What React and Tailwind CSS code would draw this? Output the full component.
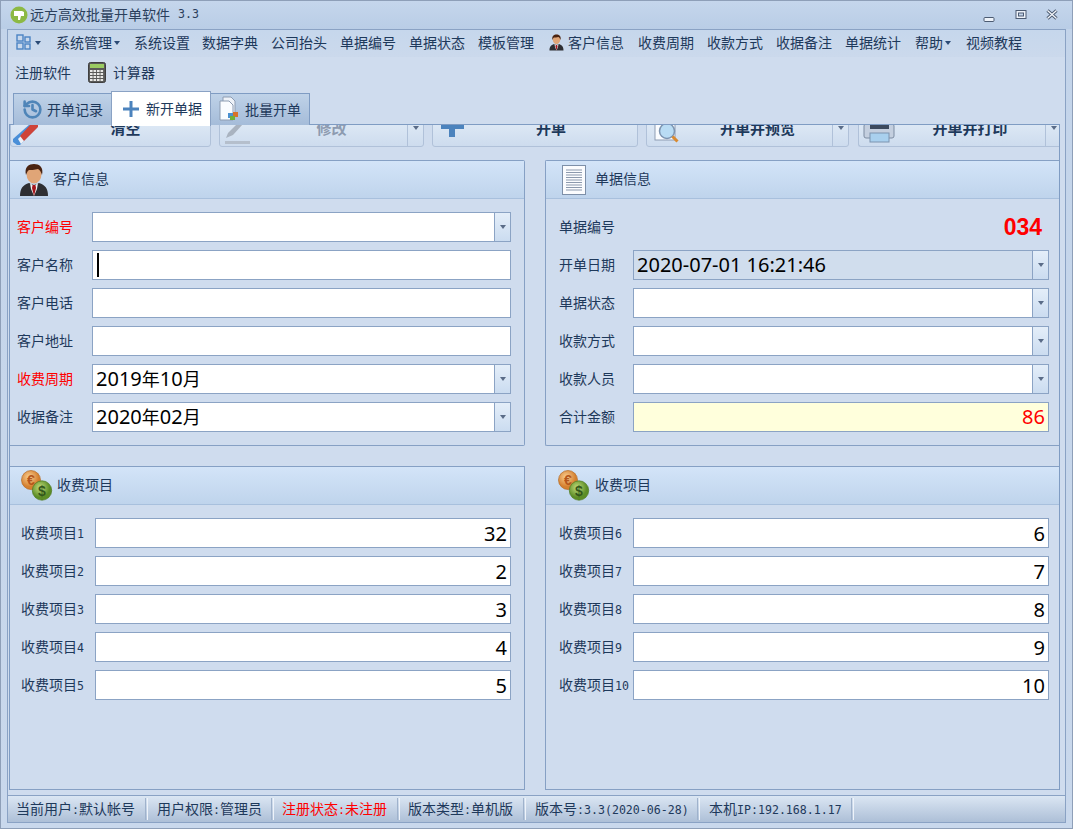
import React from "react";
import { History } from "lucide-react";

const cjk = { fontFamily: '"Noto Sans CJK SC","Noto Sans",sans-serif' };
const L = ({ children }) => (
  <span className="text-[11.6px] font-['DejaVu_Sans_Mono',monospace]">{children}</span>
);
const Y = ({ children }) => <span className="text-[18px]">{children}</span>;

const Caret = ({ c = "#2b4a75" }) => (
  <span className="inline-block w-0 h-0 border-l-[3.5px] border-r-[3.5px] border-t-[4px] border-l-transparent border-r-transparent" style={{ borderTopColor: c }} />
);

const Person = ({ s = 1 }) => (
  <svg width={30 * s} height={34 * s} viewBox="0 0 30 34">
    <path d="M1 33c0-8 3-11 9-13l5 2 5-2c6 2 9 5 9 13z" fill="#2e2f33" />
    <path d="M11 20l4 3 4-3-1 6-3 7-3-7z" fill="#f0f0f0" />
    <path d="M13.6 22h2.8l.6 3-2 8-2-8z" fill="#a5161c" />
    <ellipse cx="15" cy="11" rx="7.5" ry="9.5" fill="#e0a577" />
    <path d="M7 12C5 4 10 1 15 1s10 3 8 11c-1-3-2-5-4-6-3 1-8 1-9 1-2 1-2 3-3 5z" fill="#4a2412" />
  </svg>
);

const Coins = () => (
  <svg width="32" height="31" viewBox="0 0 32 31" style={{ fontFamily: '"Liberation Sans",sans-serif' }}>
    <defs>
      <radialGradient id="co" cx="40%" cy="35%"><stop offset="0" stopColor="#f9cf94" /><stop offset="1" stopColor="#d5802f" /></radialGradient>
      <radialGradient id="cg" cx="40%" cy="35%"><stop offset="0" stopColor="#c2dc7c" /><stop offset="1" stopColor="#5c8d26" /></radialGradient>
    </defs>
    <circle cx="10" cy="10" r="9.5" fill="url(#co)" stroke="#b56a24" strokeWidth=".7" />
    <text x="10" y="15" fontSize="14" fontWeight="700" fill="#b4561a" textAnchor="middle">€</text>
    <circle cx="21" cy="20.5" r="9.7" fill="url(#cg)" stroke="#4f7a20" strokeWidth=".7" />
    <text x="21" y="25.5" fontSize="14" fontWeight="700" fill="#33561a" textAnchor="middle">$</text>
  </svg>
);

const Doc = () => (
  <svg width="24" height="30" viewBox="0 0 24 30">
    <rect x=".5" y=".5" width="23" height="29" fill="#fbfcfe" stroke="#7d8fa8" />
    {[5, 7.5, 10, 12.5, 15, 17.5, 20, 22.5, 25].map((y) => (
      <line key={y} x1="4" x2="20" y1={y} y2={y} stroke="#8c99ad" />
    ))}
  </svg>
);

const Field = ({ v, drop, bg = "bg-white", red, caret, right, low }) => (
  <div className={`flex-1 h-[30px] border border-[#8ba3c4] flex items-stretch ${bg}`}>
    <div className={`flex-1 flex items-center px-[3px] text-[20px] leading-none ${low ? "pt-[2px]" : ""} ${right ? "justify-end" : ""} ${red ? "text-[#ff0000]" : "text-black"}`} style={{ fontFamily: '"Noto Sans","Noto Sans CJK SC",sans-serif' }}>
      {caret && <span className="w-[2px] h-[24px] bg-black ml-[1px]" />}
      {v}
    </div>
    {drop && (
      <div className="w-[16px] border-l border-[#8ba3c4] bg-gradient-to-b from-[#e4eef9] to-[#cbdcf0] flex items-center justify-center">
        <Caret c="#5a6c88" />
      </div>
    )}
  </div>
);

const Row = ({ label, w, red, low, children }) => (
  <div className="flex items-center h-[30px]">
    <div className={`text-[14px] ${low ? "" : "pb-[2px]"} ${red ? "text-[#ff0000]" : "text-[#1e395b]"}`} style={{ width: w }}>{label}</div>
    {children}
  </div>
);

const Panel = ({ icon, iconClass, title, className, bodyClass, children }) => (
  <div className={`border-t border-b border-[#86a0c4] flex flex-col ${className}`}>
    <div className="h-[38px] shrink-0 flex items-center border-b border-[#a8c0dd] bg-gradient-to-b from-[#d3e4f8] to-[#bfd4ec]">
      <div className={iconClass}>{icon}</div>
      <div className="text-[14px] pb-[2px] text-[#1e395b]">{title}</div>
    </div>
    <div className={`flex flex-col gap-[8px] pt-[13px] ${bodyClass}`}>{children}</div>
  </div>
);

const ToolBtn = ({ w, pl, split, text, icon, dis, clipR, className = "" }) => (
  <div className={`h-[34px] flex shrink-0 border border-[#b0c1d9] bg-gradient-to-b from-[#e4edf8] to-[#cddcee] ${clipR ? "rounded-bl-[3px] border-r-0" : "rounded-b-[3px]"} ${className}`} style={{ width: w }}>
    <div className={`relative flex-1 flex items-center justify-center pb-[4px] font-bold text-[15px] ${dis ? "text-[#8d9bb0]" : "text-[#1e395b]"}`} style={{ paddingLeft: pl }}>
      <div className="absolute left-0 bottom-0 flex">{icon}</div>
      {text}
    </div>
    {split && (
      <div className="w-[16px] border-l border-[#b0c1d9] flex justify-center pt-[12px]"><Caret c="#5a6c88" /></div>
    )}
  </div>
);

const Sep = () => <div className="w-[3px] h-[22px] border-l border-r border-l-[#9fb2cc] border-r-[#eef3fa] shrink-0" />;

export default function App() {
  const menu1 = ["数据字典", "公司抬头", "单据编号", "单据状态", "模板管理"];
  const menu2 = ["收费周期", "收款方式", "收据备注", "单据统计"];
  const leftFee = [["1", "32"], ["2", "2"], ["3", "3"], ["4", "4"], ["5", "5"]];
  const rightFee = [["6", "6"], ["7", "7"], ["8", "8"], ["9", "9"], ["10", "10"]];
  return (
    <div className="w-[1073px] h-[829px] overflow-hidden flex flex-col border border-[#8e9fb8] bg-gradient-to-b from-[#c3d4ea] to-[#c9d8ec] text-[#1e395b]" style={cjk}>
      {/* title bar */}
      <div className="h-[28px] shrink-0 flex items-center pb-[1px] bg-gradient-to-b from-[#c5d6ec] to-[#b9cde6]">
        <svg className="ml-[9px]" width="18" height="18" viewBox="0 0 18 18">
          <circle cx="9" cy="9" r="8.5" fill="#8cb944" />
          <path d="M4 5h8l2 1v4h-3l-1 4H8V10H4z" fill="#fff" />
        </svg>
        <span className="ml-[2px] text-[14px] text-[#2b3f5c]">远方高效批量开单软件</span>
        <span className="ml-[8px] text-[11.6px] text-[#2b3f5c] font-['DejaVu_Sans_Mono',monospace]">3.3</span>
        <div className="ml-auto flex items-center mr-[14px]">
          <svg width="12" height="12" viewBox="0 0 12 12" className="mr-[20px] mt-[6px]"><rect x="1" y="5.5" width="10" height="4" fill="#eef3fa" stroke="#4c5b72" rx="1" /></svg>
          <svg width="12" height="12" viewBox="0 0 12 12" className="mr-[19px]"><rect x="1" y="1.5" width="10" height="8" fill="#eef3fa" stroke="#4c5b72" /><rect x="3.5" y="4" width="5" height="3" fill="#c3d4ea" stroke="#4c5b72" /></svg>
          <svg width="12" height="12" viewBox="0 0 12 12"><path d="M1.5 1.5l9 8M10.5 1.5l-9 8" stroke="#4c5b72" strokeWidth="3.2" /><path d="M1.5 1.5l9 8M10.5 1.5l-9 8" stroke="#f4f7fb" strokeWidth="1.3" /></svg>
        </div>
      </div>

      {/* frame */}
      <div className="ml-[6px] w-[1059px] h-[794px] shrink-0 border border-[#8aa2c4] flex flex-col bg-[#cfdcee]">
        {/* menu */}
        <div className="h-[27px] shrink-0 flex items-center gap-[13px] pl-[8px] pb-[2px] text-[14px] whitespace-nowrap bg-gradient-to-b from-[#c6d7ec] to-[#cbd9ec]">
          <div className="flex items-center gap-[3px] w-[27px]">
            <svg width="16" height="17" viewBox="0 0 16 17" fill="none" stroke="#4a83c4" strokeWidth="1.4">
              <rect x="1" y="1" width="6" height="6" /><rect x="9" y="3" width="5" height="5" /><rect x="1" y="9" width="6" height="6" /><rect x="9" y="10" width="5" height="5" />
            </svg>
            <Caret />
          </div>
          <div className="flex items-center gap-[2px] w-[65px]">系统管理<Caret /></div>
          <div className="w-[55px] shrink-0">系统设置</div>
          {menu1.map((m) => <div key={m} className="w-[56px] shrink-0">{m}</div>)}
          <div className="flex items-center gap-[4px] ml-[2px] mr-[1px]"><Person s={0.5} />客户信息</div>
          {menu2.map((m) => <div key={m} className="w-[56px] shrink-0">{m}</div>)}
          <div className="flex items-center gap-[2px] w-[38px] ml-[1px]">帮助<Caret /></div>
          <div className="w-[56px] shrink-0">视频教程</div>
        </div>
        <div className="h-[30px] shrink-0 flex items-center pl-[7px] text-[14px]">
          <div className="w-[56px]">注册软件</div>
          <svg className="ml-[17px]" width="18" height="21" viewBox="0 0 18 21">
            <rect x=".5" y=".5" width="17" height="20" rx="2" fill="#5a5a58" stroke="#3f3f3f" />
            <rect x="2" y="2" width="14" height="4" fill="#9acb62" />
            {[8, 11, 14, 17].map((y) => [2, 5.5, 9, 12.5].map((x) => (
              <rect key={`${x}-${y}`} x={x} y={y} width="2.6" height="2" fill="#e9e9e6" />
            )))}
          </svg>
          <div className="ml-[7px]">计算器</div>
        </div>

        {/* tabs */}
        <div className="h-[37px] shrink-0 flex items-end pl-[5px] relative z-10 text-[14px]">
          <div className="w-[98px] h-[32px] flex items-center pb-[1px] border border-r-0 border-b-0 border-[#7f9cc3] bg-gradient-to-b from-[#bfd2e8] to-[#a5bcd9] -mb-[1px]">
            <History className="ml-[8px] shrink-0" size={21} color="#4f85b8" strokeWidth={3} />
            <span className="ml-[4px]">开单记录</span>
          </div>
          <div className="w-[100px] h-[35px] flex items-center pb-[1px] border border-b-0 border-[#8aa2c4] bg-white -mb-[2px]">
            <svg className="ml-[10px]" width="18" height="18" viewBox="0 0 18 18"><path d="M7.5 1h3v6.5H17v3h-6.5V17h-3v-6.5H1v-3h6.5z" fill="#4c83bd" /></svg>
            <span className="ml-[6px]">新开单据</span>
          </div>
          <div className="w-[99px] h-[32px] flex items-center pb-[1px] border border-l-0 border-b-0 border-[#7f9cc3] bg-gradient-to-b from-[#bfd2e8] to-[#a5bcd9] -mb-[1px]">
            <svg className="ml-[8px]" width="22" height="26" viewBox="0 0 22 26">
              <path d="M4 1h8l4 4v15H4z" fill="#eef2f8" stroke="#8d9cb2" />
              <path d="M1 5h9l4 4v15H1z" fill="#fafcff" stroke="#8d9cb2" />
              <rect x="9" y="17" width="5" height="5" fill="#4a90d0" /><rect x="14" y="16" width="5" height="5" fill="#d8722a" /><rect x="11" y="20" width="5" height="4" fill="#6fb03a" />
            </svg>
            <span className="ml-[4px]">批量开单</span>
          </div>
        </div>

        {/* main tab page */}
        <div className="ml-[1px] w-[1051px] h-[666px] shrink-0 border border-b-0 border-[#7f9cc3] flex flex-col">
          <div className="h-[22px] shrink-0 overflow-hidden flex items-end gap-[8px]">
            <ToolBtn w={201} pl={30} text="清空" icon={
              <svg width="30" height="22" viewBox="0 0 30 22"><path d="M6 21h3L26 4l0-4H19L2 15v3z" fill="#4a8fd8" /><path d="M10 20L26 4l0-4H22L7 15z" fill="#edf1f7" /><path d="M13 17L27 3V0H20L9 12z" fill="#cf4339" /></svg>
            } />
            <ToolBtn w={205} pl={36} split text="修改" dis icon={
              <svg width="30" height="22" viewBox="0 0 30 22"><path d="M6 14l2-5 9-9h6l-10 11z" fill="#a9b3c0" /><rect x="5" y="17" width="28" height="3" fill="#b5bfcc" /></svg>
            } />
            <ToolBtn w={206} pl={32} text="开单" icon={
              <svg width="34" height="22" viewBox="0 0 34 22"><path d="M8 0h23v5H22v8h-6V5H8z" fill="#4c83bd" /></svg>
            } />
            <ToolBtn w={203} pl={36} split text="开单并预览" icon={
              <svg width="34" height="22" viewBox="0 0 34 22"><rect x="8" y="0" width="20" height="16" fill="#fafcff" stroke="#8d9cb2" /><circle cx="20" cy="7" r="7.5" fill="#b9dcf4" stroke="#7d94b0" strokeWidth="1.5" /><path d="M25.5 12.5l5 5" stroke="#d98a30" strokeWidth="3" /></svg>
            } />
            <ToolBtn w={203} pl={36} className="ml-[1px]" split clipR text="开单并打印" icon={
              <svg width="40" height="22" viewBox="0 0 40 22"><rect x="5" y="0" width="30" height="14" rx="2" fill="#c4cfdf" stroke="#7d8ca2" /><rect x="11" y="0" width="19" height="5" fill="#3c4a5e" /><rect x="11" y="9" width="19" height="9" fill="#a9d0ee" stroke="#7d94b0" /></svg>
            } />
          </div>

          <div className="flex-1 min-h-0 mt-[13px] grid grid-cols-[515px_514px] gap-x-[20px] grid-rows-[286px_1fr] gap-y-[20px]">
            <Panel className="border-r border-[#86a0c4] rounded-tr-[2px] rounded-br-[2px]" iconClass="ml-[9px] w-[34px]" bodyClass="pl-[7px] pr-[13px]" icon={<Person />} title="客户信息">
              <Row w={75} label="客户编号" red><Field drop /></Row>
              <Row w={75} label="客户名称"><Field caret /></Row>
              <Row w={75} label="客户电话"><Field /></Row>
              <Row w={75} label="客户地址"><Field /></Row>
              <Row w={75} label="收费周期" red><Field drop v={<>2019<Y>年</Y>10<Y>月</Y></>} /></Row>
              <Row w={75} label="收据备注"><Field drop v={<>2020<Y>年</Y>02<Y>月</Y></>} /></Row>
            </Panel>
            <Panel className="border-l border-[#86a0c4] rounded-tl-[2px] rounded-bl-[2px]" iconClass="ml-[16px] w-[33px]" bodyClass="pl-[13px] pr-[10px]" icon={<Doc />} title="单据信息">
              <Row w={74} label="单据编号">
                <div className="flex-1 text-right pr-[7px] text-[23px] font-bold text-[#ff0000] font-['Liberation_Sans',sans-serif]">034</div>
              </Row>
              <Row w={74} label="开单日期"><Field drop bg="bg-[#d0dded]" v="2020-07-01 16:21:46" /></Row>
              <Row w={74} label="单据状态"><Field drop /></Row>
              <Row w={74} label="收款方式"><Field drop /></Row>
              <Row w={74} label="收款人员"><Field drop /></Row>
              <Row w={74} label="合计金额"><Field right red bg="bg-[#ffffdc]" v="86" /></Row>
            </Panel>
            <Panel className="border-r border-[#86a0c4]" iconClass="ml-[11px] w-[36px]" bodyClass="pl-[11px] pr-[13px]" icon={<Coins />} title="收费项目">
              {leftFee.map(([n, v]) => (
                <Row key={n} low w={74} label={<>收费项目<L>{n}</L></>}><Field right low v={v} /></Row>
              ))}
            </Panel>
            <Panel className="border-l border-[#86a0c4]" iconClass="ml-[12px] w-[37px]" bodyClass="pl-[13px] pr-[10px]" icon={<Coins />} title="收费项目">
              {rightFee.map(([n, v]) => (
                <Row key={n} low w={74} label={<>收费项目<L>{n}</L></>}><Field right low v={v} /></Row>
              ))}
            </Panel>
          </div>
        </div>

        {/* status bar */}
        <div className="mt-[5px] flex-1 border-t border-[#8aa2c4] flex items-center bg-gradient-to-b from-[#dbe6f3] to-[#adbfd7] text-[14px]">
          <div className="w-[137px] pl-[8px] pb-[1px]">当前用户<L>:</L>默认帐号</div><Sep />
          <div className="w-[123px] pl-[9px] pb-[1px]">用户权限<L>:</L>管理员</div><Sep />
          <div className="w-[123px] pl-[8px] pb-[1px] text-[#ff0000]">注册状态<L>:</L>未注册</div><Sep />
          <div className="w-[123px] pl-[8px] pb-[1px]">版本类型<L>:</L>单机版</div><Sep />
          <div className="w-[171px] pl-[9px] pb-[1px]">版本号<L>:3.3(2020-06-28)</L></div><Sep />
          <div className="w-[151px] pl-[9px] pb-[1px]">本机<L>IP:192.168.1.17</L></div><Sep />
        </div>
      </div>
    </div>
  );
}
